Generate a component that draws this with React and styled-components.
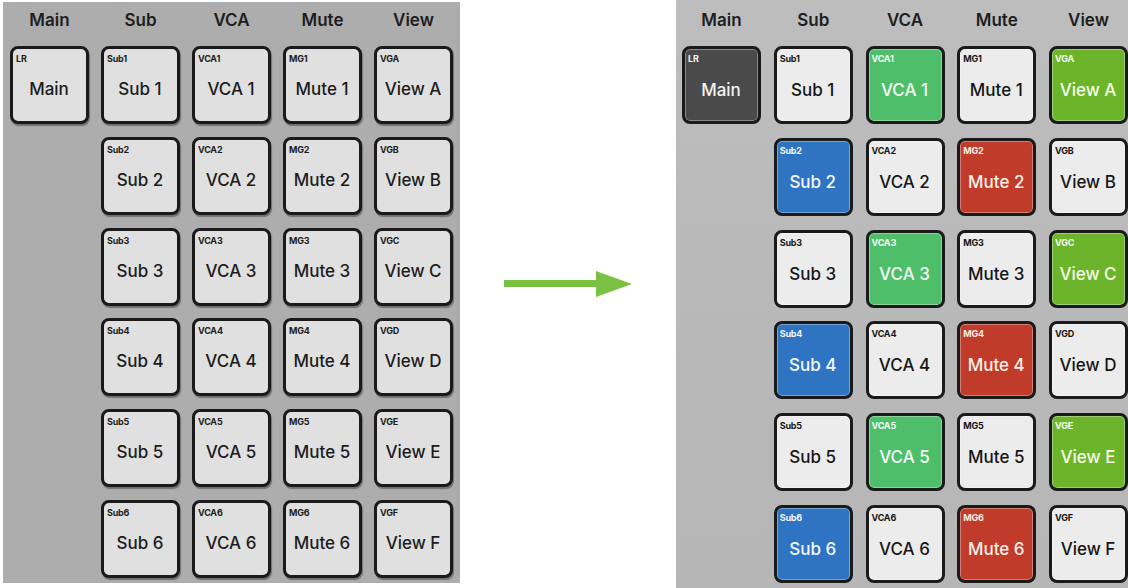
import React from 'react';
import styled, { createGlobalStyle, css } from 'styled-components';

const GlobalStyle = createGlobalStyle`
    html, body {
        margin: 0;
        padding: 0;
        background: #ffffff;
        font-family: Inter, "Open Sans", "Liberation Sans", sans-serif;
    }
`;

const columns = ['Main', 'Sub', 'VCA', 'Mute', 'View'];
const letters = ['A', 'B', 'C', 'D', 'E', 'F'];

// build the 6 rows x 5 columns of buttons, main only has the first row
function buildRows(colorFor) {
    return letters.map((letter, i) => {
        const n = i + 1;
        return [
            i === 0 ? { tag: 'LR', label: 'Main', tone: colorFor('main', i) } : null,
            { tag: `Sub${n}`, label: `Sub ${n}`, tone: colorFor('sub', i) },
            { tag: `VCA${n}`, label: `VCA ${n}`, tone: colorFor('vca', i) },
            { tag: `MG${n}`, label: `Mute ${n}`, tone: colorFor('mute', i) },
            { tag: `VG${letter}`, label: `View ${letter}`, tone: colorFor('view', i) },
        ];
    });
}

const beforeRows = buildRows(() => 'plain');

const afterRows = buildRows((kind, i) => {
    if (kind === 'main') return 'dark';
    if (kind === 'sub') return i % 2 === 1 ? 'blue' : 'white';
    if (kind === 'vca') return i % 2 === 0 ? 'green' : 'white';
    if (kind === 'mute') return i % 2 === 1 ? 'red' : 'white';
    if (kind === 'view') return i % 2 === 0 ? 'lime' : 'white';
    return 'white';
});

const tones = {
    plain: { bg: '#e0e0e0', fg: '#1c1c1c' },
    white: { bg: '#ececec', fg: '#161616' },
    dark: { bg: '#4a4a4a', fg: '#f2f2f2' },
    blue: { bg: '#2f74c3', fg: '#f4f8ff' },
    green: { bg: '#4fbe6b', fg: '#f2fff5' },
    lime: { bg: '#6cb52a', fg: '#f6ffe8' },
    red: { bg: '#c13b2b', fg: '#fff0e8' },
};

function MixPanel({ rows, after }) {
    return (
        <Panel $after={after}>
            <HeaderRow $after={after}>
                {columns.map((c) => (
                    <HeaderCell key={c}>{c}</HeaderCell>
                ))}
            </HeaderRow>
            <ButtonGrid $after={after}>
                {rows.map((row, r) =>
                    row.map((btn, c) =>
                        btn ? (
                            <MixButton key={`${r}-${c}`} $tone={btn.tone} $after={after}>
                                <Tag>{btn.tag}</Tag>
                                <Label $after={after}>{btn.label}</Label>
                            </MixButton>
                        ) : (
                            <Empty key={`${r}-${c}`} />
                        )
                    )
                )}
            </ButtonGrid>
        </Panel>
    );
}

function App() {
    return (
        <Page>
            <GlobalStyle />
            <MixPanel rows={beforeRows} />
            <ArrowZone>
                <svg width="136" height="32" viewBox="0 0 136 32">
                    <rect x="0" y="12" width="96" height="7" fill="#7bc143" />
                    <polygon points="92,3 128,16 92,29" fill="#7bc143" />
                </svg>
            </ArrowZone>
            <MixPanel rows={afterRows} after />
        </Page>
    );
}

const Page = styled.div`
    display: flex;
    flex-direction: row;
    align-items: flex-start;
    width: 1128px;
    height: 588px;
    overflow: hidden;
`;

const Panel = styled.div`
    display: flex;
    flex-direction: column;
    box-sizing: border-box;
    ${({ $after }) =>
        $after
            ? css`
                  width: 452px;
                  height: 588px;
                  padding: 0 0 0 6px;
                  background: linear-gradient(180deg, #bdbdbd 0%, #b9b9b9 50%, #b6b6b6 100%);
              `
            : css`
                  width: 457px;
                  height: 581px;
                  margin: 2px 0 0 3px;
                  padding: 0 7px;
                  background: #adadad;
              `}
`;

const HeaderRow = styled.div`
    display: grid;
    grid-template-columns: repeat(5, 79px);
    column-gap: ${({ $after }) => ($after ? '12.75px' : '12px')};
    height: ${({ $after }) => ($after ? '46px' : '44px')};
    align-items: center;
    padding-bottom: ${({ $after }) => ($after ? '6px' : '8px')};
    box-sizing: border-box;
`;

const HeaderCell = styled.div`
    text-align: center;
    font-size: 17px;
    font-weight: 600;
    color: #1e1e1e;
`;

const ButtonGrid = styled.div`
    display: grid;
    grid-template-columns: repeat(5, 79px);
    grid-auto-rows: 78px;
    column-gap: ${({ $after }) => ($after ? '12.75px' : '12px')};
    row-gap: ${({ $after }) => ($after ? '13.8px' : '12.8px')};
`;

const Empty = styled.div``;

const MixButton = styled.div`
    display: flex;
    flex-direction: column;
    box-sizing: border-box;
    padding: 4px 4px 0 3px;
    border: 3px solid #1a1a1a;
    border-radius: 8px;
    background: ${({ $tone }) => tones[$tone].bg};
    color: ${({ $tone }) => tones[$tone].fg};
    box-shadow: ${({ $after }) =>
        $after ? 'inset 0 0 0 1px rgba(255,255,255,0.35)' : '1px 2px 1px rgba(0,0,0,0.35)'};
`;

const Tag = styled.div`
    font-size: 9px;
    font-weight: 700;
    line-height: 11px;
    height: 11px;
    letter-spacing: -0.2px;
`;

const Label = styled.div`
    flex: 1;
    display: flex;
    align-items: center;
    justify-content: center;
    font-size: 17px;
    font-weight: 500;
    padding-bottom: ${({ $after }) => ($after ? '5px' : '7px')};
`;

const ArrowZone = styled.div`
    display: flex;
    align-items: center;
    justify-content: flex-start;
    width: 216px;
    height: 568px;
    padding-left: 44px;
    box-sizing: border-box;
`;

export default App;
